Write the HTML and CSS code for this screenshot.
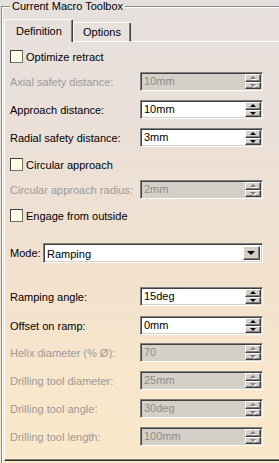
FILE: index.html
```html
<!DOCTYPE html>
<html>
<head>
<meta charset="utf-8">
<link rel="stylesheet" href="styles.css">
</head>
<body>
<div class="group">
  <span class="legend">Current Macro Toolbox</span>
  <div class="tabs">
    <div class="tab active">Definition</div>
    <div class="tab">Options</div>
    <div class="tab-rest"></div>
  </div>
  <div class="pane">
    <div class="row check mt5"><span class="box"></span>Optimize retract</div>
    <div class="row mt6 disabled"><span class="lbl">Axial safety distance:</span><div class="field"><span class="val">10mm</span><span class="spin"><span class="btn up"></span><span class="btn down"></span></span></div></div>
    <div class="row mt9"><span class="lbl">Approach distance:</span><div class="field"><span class="val">10mm</span><span class="spin"><span class="btn up"></span><span class="btn down"></span></span></div></div>
    <div class="row mt9"><span class="lbl">Radial safety distance:</span><div class="field"><span class="val">3mm</span><span class="spin"><span class="btn up"></span><span class="btn down"></span></span></div></div>
    <div class="row check mt8"><span class="box"></span>Circular approach</div>
    <div class="row mt6 disabled"><span class="lbl">Circular approach radius:</span><div class="field"><span class="val">2mm</span><span class="spin"><span class="btn up"></span><span class="btn down"></span></span></div></div>
    <div class="row check mt7"><span class="box"></span>Engage from outside</div>
    <div class="row combo-row mt18"><span class="lbl mode">Mode:</span><div class="combo"><span class="val">Ramping</span><span class="drop"></span></div></div>
    <div class="row mt24"><span class="lbl">Ramping angle:</span><div class="field"><span class="val">15deg</span><span class="spin"><span class="btn up"></span><span class="btn down"></span></span></div></div>
    <div class="row mt10"><span class="lbl">Offset on ramp:</span><div class="field"><span class="val">0mm</span><span class="spin"><span class="btn up"></span><span class="btn down"></span></span></div></div>
    <div class="row mt8 disabled"><span class="lbl">Helix diameter (% Ø):</span><div class="field"><span class="val">70</span><span class="spin"><span class="btn up"></span><span class="btn down"></span></span></div></div>
    <div class="row mt9 disabled"><span class="lbl">Drilling tool diameter:</span><div class="field"><span class="val">25mm</span><span class="spin"><span class="btn up"></span><span class="btn down"></span></span></div></div>
    <div class="row mt9 disabled"><span class="lbl">Drilling tool angle:</span><div class="field"><span class="val">30deg</span><span class="spin"><span class="btn up"></span><span class="btn down"></span></span></div></div>
    <div class="row mt9 disabled"><span class="lbl">Drilling tool length:</span><div class="field"><span class="val">100mm</span><span class="spin"><span class="btn up"></span><span class="btn down"></span></span></div></div>
  </div>
</div>
</body>
</html>
```
FILE: styles.css
```css
html, body {
  margin: 0;
  padding: 0;
  width: 279px;
  height: 463px;
  overflow: hidden;
}
body {
  font-family: "Liberation Sans", Arial, sans-serif;
  font-size: 11px;
  color: #000;
  background: linear-gradient(#e6e0de 0%, #ebe0d8 30%, #f1e0cf 55%, #f7e6ca 80%, #f9e9c9 100%);
}
.group {
  position: relative;
  margin: 6px 0 0 1px;
  width: 278px;
  height: 457px;
  border-top: 1px solid #8a8a8a;
  border-left: 1px solid #8a8a8a;
  box-shadow: inset 1px 1px 0 #fff;
  padding: 12px 0 0 2px;
  box-sizing: border-box;
}
.legend {
  position: absolute;
  top: -7px;
  left: 8px;
  padding: 0 2px 0 2px;
  line-height: 13px;
  background: #e6e0de;
}
.tabs {
  display: flex;
  align-items: flex-end;
  height: 23px;
}
.tab {
  box-sizing: border-box;
  height: 20px;
  padding: 0 9px 0 9px;
  line-height: 18px;
  border-top: 1px solid #fff;
  border-left: 1px solid #fff;
  border-right: 1px solid #404040;
  border-bottom: 1px solid #fff;
  box-shadow: inset -1px 0 0 #808080;
  border-radius: 2px 2px 0 0;
  width: 58px;
}
.tab.active {
  height: 23px;
  width: 69px;
  padding-left: 11px;
  line-height: 22px;
  border-bottom: none;
}
.tab-rest {
  flex: 1;
  border-bottom: 1px solid #fff;
}
.pane {
  box-sizing: border-box;
  height: 419px;
  border-left: 1px solid #fff;
  border-bottom: 1px solid #2a2a2a;
  box-shadow: inset 0 -1px 0 #808080;
  padding: 0 0 0 5px;
  display: flex;
  flex-direction: column;
}
.row {
  display: flex;
  align-items: center;
  height: 19px;
  flex: none;
}
.mt5 { margin-top: 5px; }
.mt6 { margin-top: 6px; }
.mt7 { margin-top: 7px; }
.mt8 { margin-top: 8px; }
.mt9 { margin-top: 9px; }
.mt10 { margin-top: 10px; }
.mt18 { margin-top: 18px; }
.mt24 { margin-top: 24px; }
.lbl {
  width: 130px;
  white-space: nowrap;
}
.disabled .lbl { color: #9a9a9a; }
.box {
  width: 13px;
  height: 13px;
  box-sizing: border-box;
  border: 1px solid #404040;
  border-right-color: #707070;
  border-bottom-color: #707070;
  background: #fffee4;
  margin-right: 3px;
}
.field {
  box-sizing: border-box;
  width: 123px;
  height: 19px;
  border-top: 1px solid #808080;
  border-left: 1px solid #808080;
  border-right: 1px solid #fff;
  border-bottom: 1px solid #fff;
  box-shadow: inset 1px 1px 0 #404040, inset -1px -1px 0 #d4d0c8;
  background: #fff;
  display: flex;
  align-items: stretch;
  padding: 1px;
}
.disabled .field { background: #d4d0c8; }
.val {
  flex: 1;
  padding-left: 2px;
  line-height: 15px;
}
.disabled .val { color: #8c8c8c; }
.spin {
  width: 16px;
  display: flex;
  flex-direction: column;
}
.btn {
  flex: 1;
  box-sizing: border-box;
  background: #d4d0c8;
  border-top: 1px solid #fff;
  border-left: 1px solid #fff;
  border-right: 1px solid #404040;
  border-bottom: 1px solid #404040;
  box-shadow: inset -1px -1px 0 #808080;
  display: flex;
  align-items: center;
  justify-content: center;
}
.btn::after {
  content: "";
  width: 0;
  height: 0;
  border-left: 3px solid transparent;
  border-right: 3px solid transparent;
  margin-right: 1px;
}
.btn.up::after { border-bottom: 3px solid #000; }
.btn.down::after { border-top: 3px solid #000; }
.disabled .btn.up::after {
  border-bottom-color: #808080;
  filter: drop-shadow(1px 1px 0 #fff);
}
.disabled .btn.down::after {
  border-top-color: #808080;
  filter: drop-shadow(1px 1px 0 #fff);
}
.lbl.mode { width: 33px; }
.combo {
  box-sizing: border-box;
  width: 220px;
  height: 20px;
  border-top: 1px solid #808080;
  border-left: 1px solid #808080;
  border-right: 1px solid #fff;
  border-bottom: 1px solid #fff;
  box-shadow: inset 1px 1px 0 #404040, inset -1px -1px 0 #d4d0c8;
  background: #fff;
  display: flex;
  padding: 2px 2px 2px 2px;
}
.combo-row { height: 20px; }
.combo .val { line-height: 16px; padding-left: 1px; }
.drop {
  width: 17px;
  box-sizing: border-box;
  background: #d4d0c8;
  border-top: 1px solid #fff;
  border-left: 1px solid #fff;
  border-right: 1px solid #404040;
  border-bottom: 1px solid #404040;
  box-shadow: inset -1px -1px 0 #808080;
  display: flex;
  align-items: center;
  justify-content: center;
}
.drop::after {
  content: "";
  width: 0;
  height: 0;
  border-left: 4px solid transparent;
  border-right: 4px solid transparent;
  border-top: 4px solid #000;
  margin-right: 1px;
}
```
